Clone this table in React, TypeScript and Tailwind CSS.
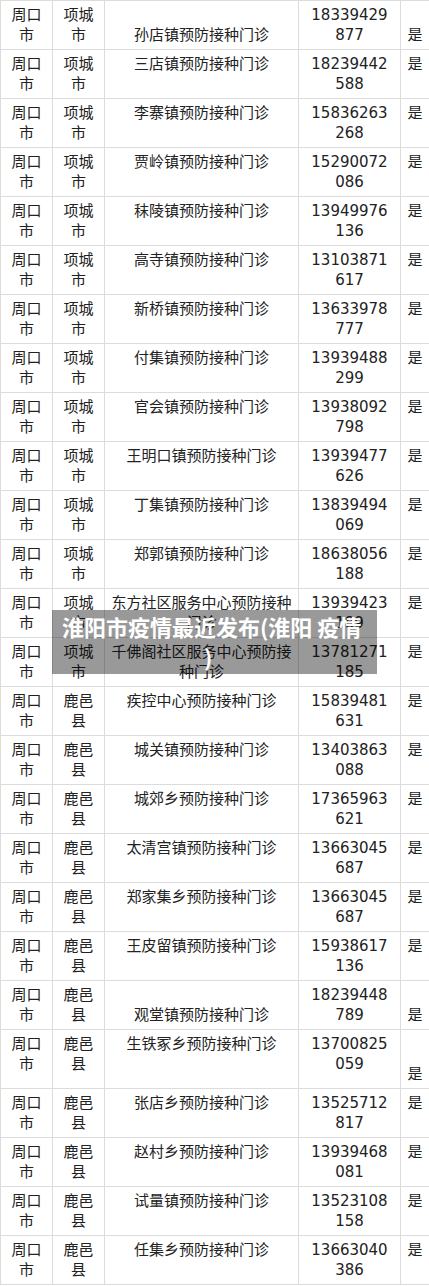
type Row = {
  city: string;
  county: string;
  name: string[];
  phone: string[];
  nameBottom?: boolean;
  yesBottom?: boolean;
  tall?: boolean;
};

const rows: Row[] = [
  { city: '周口', county: '项城', name: ['孙店镇预防接种门诊'], phone: ['18339429', '877'], nameBottom: true, yesBottom: true },
  { city: '周口', county: '项城', name: ['三店镇预防接种门诊'], phone: ['18239442', '588'] },
  { city: '周口', county: '项城', name: ['李寨镇预防接种门诊'], phone: ['15836263', '268'] },
  { city: '周口', county: '项城', name: ['贾岭镇预防接种门诊'], phone: ['15290072', '086'] },
  { city: '周口', county: '项城', name: ['秣陵镇预防接种门诊'], phone: ['13949976', '136'] },
  { city: '周口', county: '项城', name: ['高寺镇预防接种门诊'], phone: ['13103871', '617'] },
  { city: '周口', county: '项城', name: ['新桥镇预防接种门诊'], phone: ['13633978', '777'] },
  { city: '周口', county: '项城', name: ['付集镇预防接种门诊'], phone: ['13939488', '299'] },
  { city: '周口', county: '项城', name: ['官会镇预防接种门诊'], phone: ['13938092', '798'] },
  { city: '周口', county: '项城', name: ['王明口镇预防接种门诊'], phone: ['13939477', '626'] },
  { city: '周口', county: '项城', name: ['丁集镇预防接种门诊'], phone: ['13839494', '069'] },
  { city: '周口', county: '项城', name: ['郑郭镇预防接种门诊'], phone: ['18638056', '188'] },
  { city: '周口', county: '项城', name: ['东方社区服务中心预防接种', '门诊'], phone: ['13939423', '189'] },
  { city: '周口', county: '项城', name: ['千佛阁社区服务中心预防接', '种门诊'], phone: ['13781271', '185'] },
  { city: '周口', county: '鹿邑', name: ['疾控中心预防接种门诊'], phone: ['15839481', '631'] },
  { city: '周口', county: '鹿邑', name: ['城关镇预防接种门诊'], phone: ['13403863', '088'] },
  { city: '周口', county: '鹿邑', name: ['城郊乡预防接种门诊'], phone: ['17365963', '621'] },
  { city: '周口', county: '鹿邑', name: ['太清宫镇预防接种门诊'], phone: ['13663045', '687'] },
  { city: '周口', county: '鹿邑', name: ['郑家集乡预防接种门诊'], phone: ['13663045', '687'] },
  { city: '周口', county: '鹿邑', name: ['王皮留镇预防接种门诊'], phone: ['15938617', '136'] },
  { city: '周口', county: '鹿邑', name: ['观堂镇预防接种门诊'], phone: ['18239448', '789'], nameBottom: true, yesBottom: true },
  { city: '周口', county: '鹿邑', name: ['生铁冢乡预防接种门诊'], phone: ['13700825', '059'], yesBottom: true, tall: true },
  { city: '周口', county: '鹿邑', name: ['张店乡预防接种门诊'], phone: ['13525712', '817'] },
  { city: '周口', county: '鹿邑', name: ['赵村乡预防接种门诊'], phone: ['13939468', '081'] },
  { city: '周口', county: '鹿邑', name: ['试量镇预防接种门诊'], phone: ['13523108', '158'] },
  { city: '周口', county: '鹿邑', name: ['任集乡预防接种门诊'], phone: ['13663040', '386'] },
];

const cell = 'border border-[#dcdcdc] px-[4px] py-[4px] text-center align-top';

function Lines({ items }: { items: string[] }) {
  return (
    <>
      {items.map((t, i) => (
        <div key={i}>{t}</div>
      ))}
    </>
  );
}

export default function App() {
  return (
    <div
      className="relative w-[429px] overflow-hidden bg-white text-[15px] leading-[20px] text-[#222]"
      style={{ fontFamily: '"DejaVu Sans", "Noto Sans CJK SC", sans-serif' }}
    >
      <table className="w-[429px] table-fixed border-collapse">
        <colgroup>
          <col className="w-[52px]" />
          <col className="w-[52px]" />
          <col className="w-[194px]" />
          <col className="w-[102px]" />
          <col className="w-[29px]" />
        </colgroup>
        <tbody>
          {rows.map((r, i) => (
            <tr key={i}>
              <td className={cell}>
                <Lines items={[r.city, '市']} />
              </td>
              <td className={cell}>
                <Lines items={[r.county, r.county === '项城' ? '市' : '县']} />
              </td>
              <td className={cell + (r.nameBottom ? ' !align-bottom' : '')}>
                <Lines items={r.name} />
              </td>
              <td className={cell}>
                <Lines items={r.phone} />
              </td>
              <td className={cell + (r.yesBottom ? ' !align-bottom' : '')}>
                <div className={r.tall ? 'pt-[30px]' : ''}>是</div>
              </td>
            </tr>
          ))}
        </tbody>
      </table>

      <div
        className="absolute left-[52px] top-[610px] h-[64px] w-[325px] bg-black/40 pl-[10px] pt-[1px] text-[22px] font-bold leading-[30px] text-white"
        style={{ fontFamily: '"Noto Sans CJK SC", sans-serif' }}
      >
        <div>淮阳市疫情最近发布(淮阳 疫情</div>
        <div className="pl-[142px]">)</div>
      </div>
    </div>
  );
}
